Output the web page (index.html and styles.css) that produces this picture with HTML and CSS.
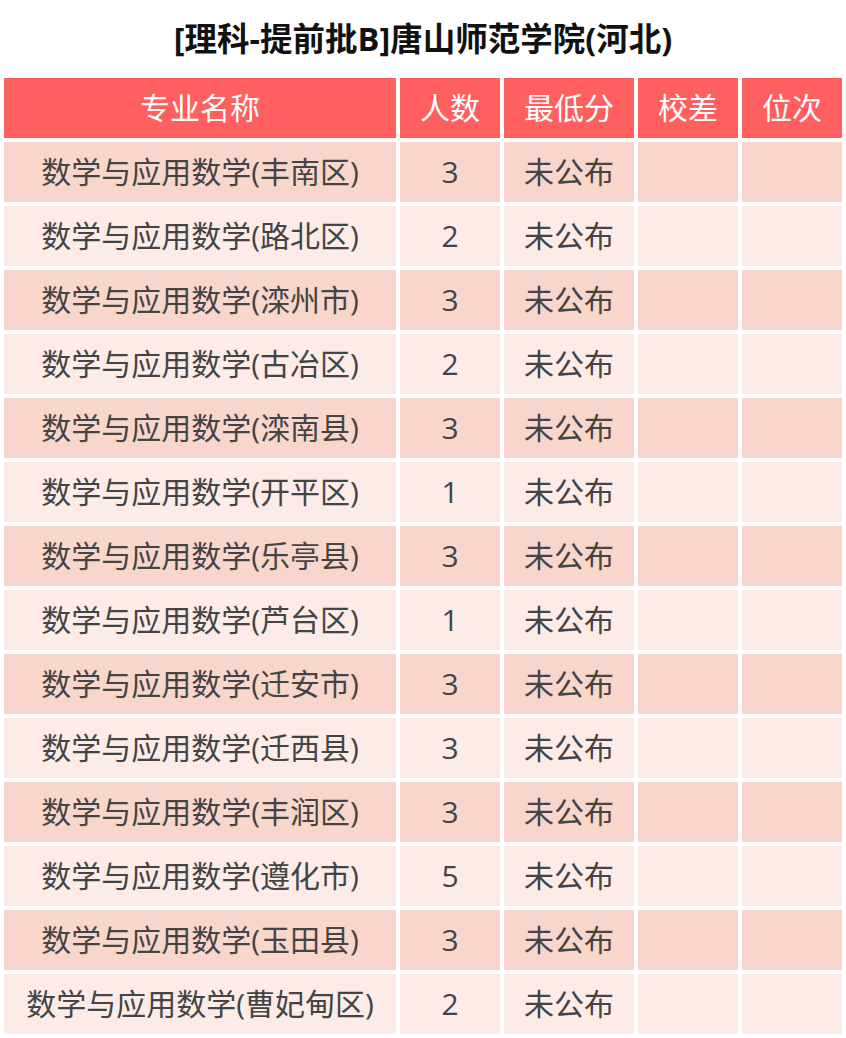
FILE: index.html
```html
<!DOCTYPE html>
<html lang="zh-CN">
<head>
<meta charset="utf-8">
<title>唐山师范学院</title>
<link rel="stylesheet" href="styles.css">
</head>
<body>
<div class="page">
  <h1 class="title">[理科-提前批B]唐山师范学院(河北)</h1>
  <table class="score-table">
    <colgroup>
      <col class="c-name"><col class="c-num"><col class="c-score"><col class="c-diff"><col class="c-rank">
    </colgroup>
    <thead>
      <tr><th>专业名称</th><th>人数</th><th>最低分</th><th>校差</th><th>位次</th></tr>
    </thead>
    <tbody>
      <tr><td>数学与应用数学(丰南区)</td><td>3</td><td>未公布</td><td></td><td></td></tr>
      <tr><td>数学与应用数学(路北区)</td><td>2</td><td>未公布</td><td></td><td></td></tr>
      <tr><td>数学与应用数学(滦州市)</td><td>3</td><td>未公布</td><td></td><td></td></tr>
      <tr><td>数学与应用数学(古冶区)</td><td>2</td><td>未公布</td><td></td><td></td></tr>
      <tr><td>数学与应用数学(滦南县)</td><td>3</td><td>未公布</td><td></td><td></td></tr>
      <tr><td>数学与应用数学(开平区)</td><td>1</td><td>未公布</td><td></td><td></td></tr>
      <tr><td>数学与应用数学(乐亭县)</td><td>3</td><td>未公布</td><td></td><td></td></tr>
      <tr><td>数学与应用数学(芦台区)</td><td>1</td><td>未公布</td><td></td><td></td></tr>
      <tr><td>数学与应用数学(迁安市)</td><td>3</td><td>未公布</td><td></td><td></td></tr>
      <tr><td>数学与应用数学(迁西县)</td><td>3</td><td>未公布</td><td></td><td></td></tr>
      <tr><td>数学与应用数学(丰润区)</td><td>3</td><td>未公布</td><td></td><td></td></tr>
      <tr><td>数学与应用数学(遵化市)</td><td>5</td><td>未公布</td><td></td><td></td></tr>
      <tr><td>数学与应用数学(玉田县)</td><td>3</td><td>未公布</td><td></td><td></td></tr>
      <tr><td>数学与应用数学(曹妃甸区)</td><td>2</td><td>未公布</td><td></td><td></td></tr>
    </tbody>
  </table>
</div>
</body>
</html>
```

FILE: styles.css
```css
html, body {
  margin: 0;
  padding: 0;
  background: #ffffff;
}

body {
  font-family: "Open Sans", "Noto Sans CJK SC", sans-serif;
  color: #444444;
}

.page {
  width: 846px;
}

.title {
  margin: 0;
  height: 70px;
  padding-top: 4px;
  line-height: 70px;
  font-size: 32.5px;
  font-weight: 700;
  color: #111111;
  text-align: center;
}

.score-table {
  width: 846px;
  table-layout: fixed;
  border-collapse: separate;
  border-spacing: 4px;
  margin: 0;
}

.c-name { width: 392px; }
.c-num { width: 100px; }
.c-score { width: 130px; }
.c-diff { width: 100px; }
.c-rank { width: 100px; }

.score-table th,
.score-table td {
  height: 60px;
  padding: 0;
  text-align: center;
  vertical-align: middle;
  font-size: 30px;
  line-height: 60px;
  white-space: nowrap;
}

.score-table th {
  background: #ff5f5f;
  color: #ffffff;
  font-weight: 400;
}

.score-table tbody tr:nth-child(odd) td {
  background: #f8d6cc;
}

.score-table tbody tr:nth-child(even) td {
  background: #fcebe6;
}
```
